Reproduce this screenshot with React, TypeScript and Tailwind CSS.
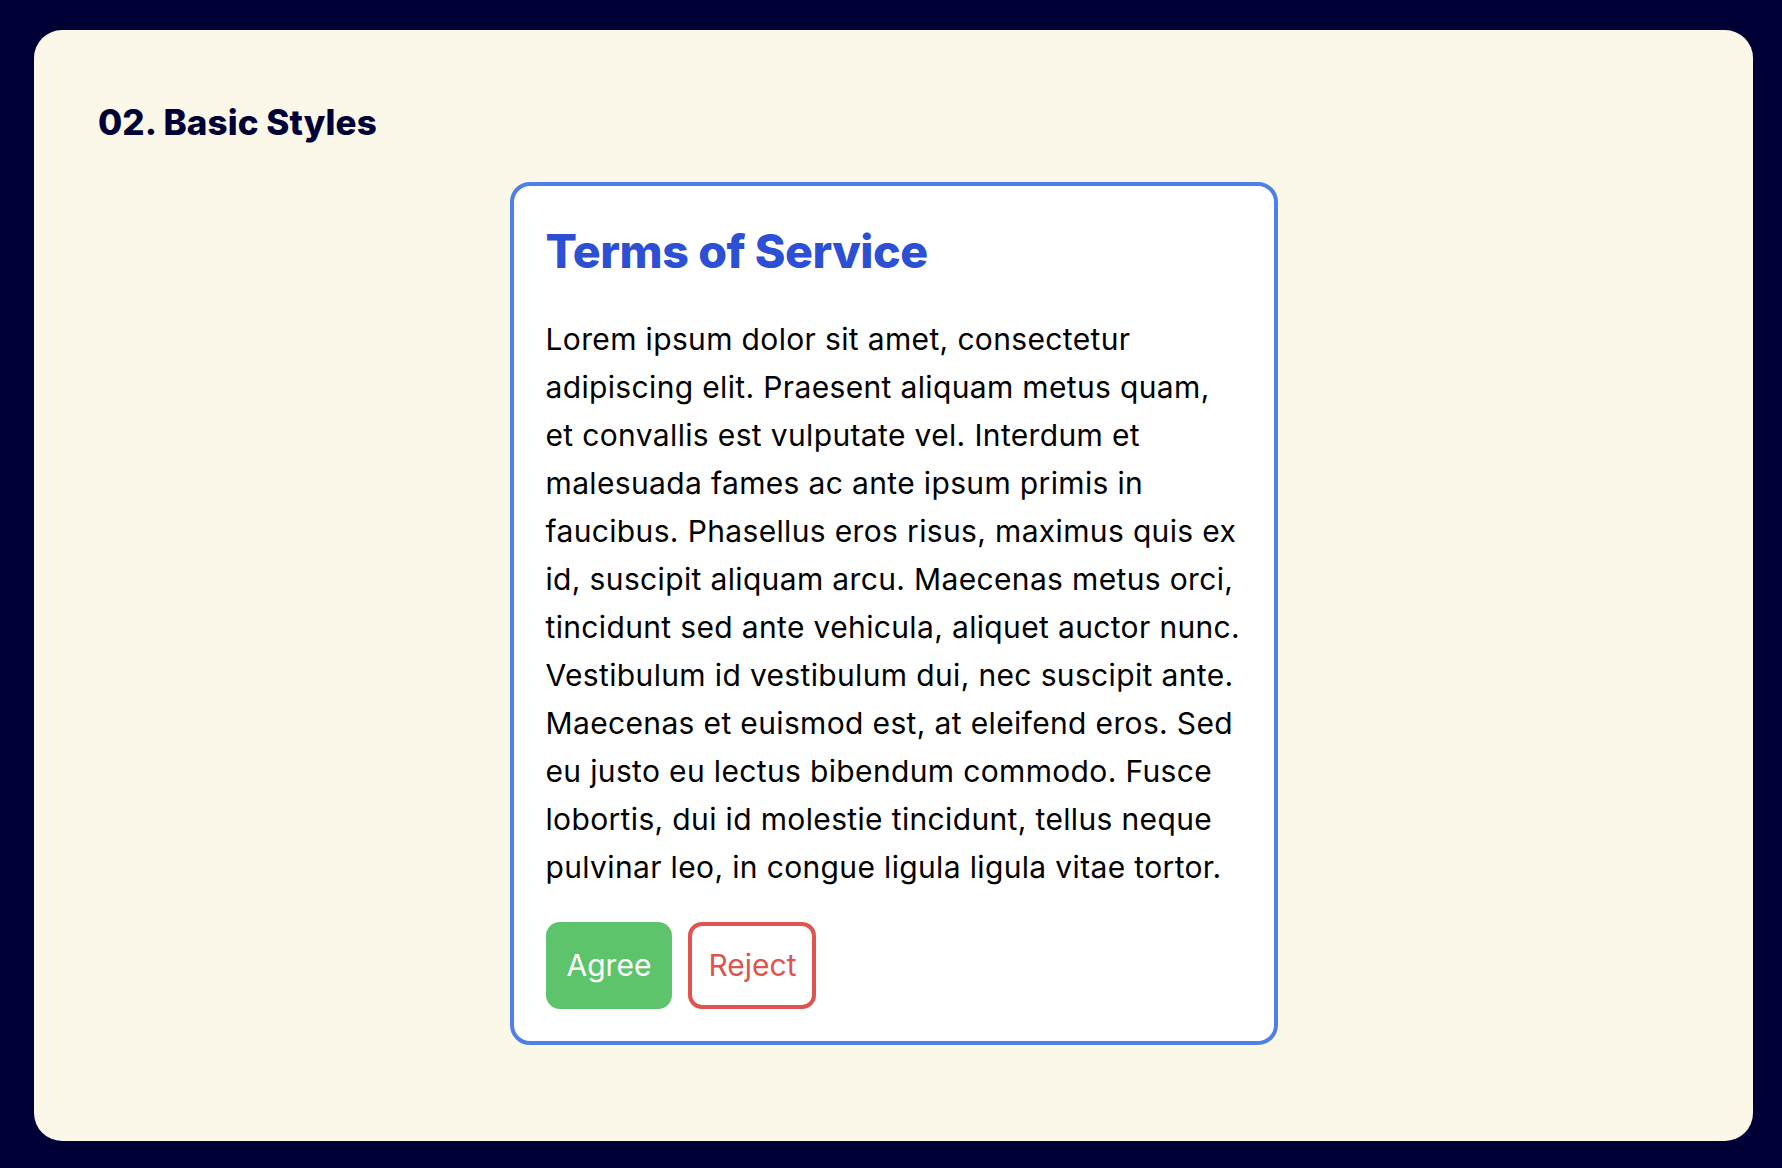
import { useState } from 'react'

const terms =
  'Lorem ipsum dolor sit amet, consectetur adipiscing elit. Praesent aliquam metus quam, et convallis est vulputate vel. Interdum et malesuada fames ac ante ipsum primis in faucibus. Phasellus eros risus, maximus quis ex id, suscipit aliquam arcu. Maecenas metus orci, tincidunt sed ante vehicula, aliquet auctor nunc. Vestibulum id vestibulum dui, nec suscipit ante. Maecenas et euismod est, at eleifend eros. Sed eu justo eu lectus bibendum commodo. Fusce lobortis, dui id molestie tincidunt, tellus neque pulvinar leo, in congue ligula ligula vitae tortor.'

export default function App() {
  const [choice, setChoice] = useState<'agree' | 'reject' | null>(null)

  return (
    <div className="min-h-screen bg-[#000037] pt-[30px] pl-[34px] pr-[29px] pb-[27px] flex font-['Inter',sans-serif]">
      <div className="flex-1 rounded-[28px] bg-[#fbf8e9] pt-[64px] px-16">
        <h2 className="text-[35px] leading-[56px] font-extrabold tracking-[0.1px] text-[#000037]">
          02. Basic Styles
        </h2>

        <div className="mx-auto mt-[32px] w-[768px] rounded-[20px] border-4 border-[#4f80e8] bg-white px-8 pt-[37px] pb-[32px]">
          <h1 className="text-[46.5px] leading-[57px] font-extrabold tracking-[-0.01em] text-[#2c4fd4]">
            Terms of Service
          </h1>
          <p className="mt-[35px] text-[30px] leading-[48px] tracking-[0.35px] text-black">{terms}</p>

          <div className="mt-[31px] flex gap-4">
            <button
              onClick={() => setChoice('agree')}
              className={`h-[87px] rounded-[14px] bg-[#5ec46b] px-[21px] text-[30px] text-white ${
                choice === 'agree' ? 'ring-2 ring-[#5ec46b]/40' : ''
              }`}
            >
              Agree
            </button>
            <button
              onClick={() => setChoice('reject')}
              className="h-[87px] rounded-[14px] border-4 border-[#e0534f] bg-white px-[16px] text-[30px] text-[#e0534f]"
            >
              Reject
            </button>
          </div>
        </div>
      </div>
    </div>
  )
}
